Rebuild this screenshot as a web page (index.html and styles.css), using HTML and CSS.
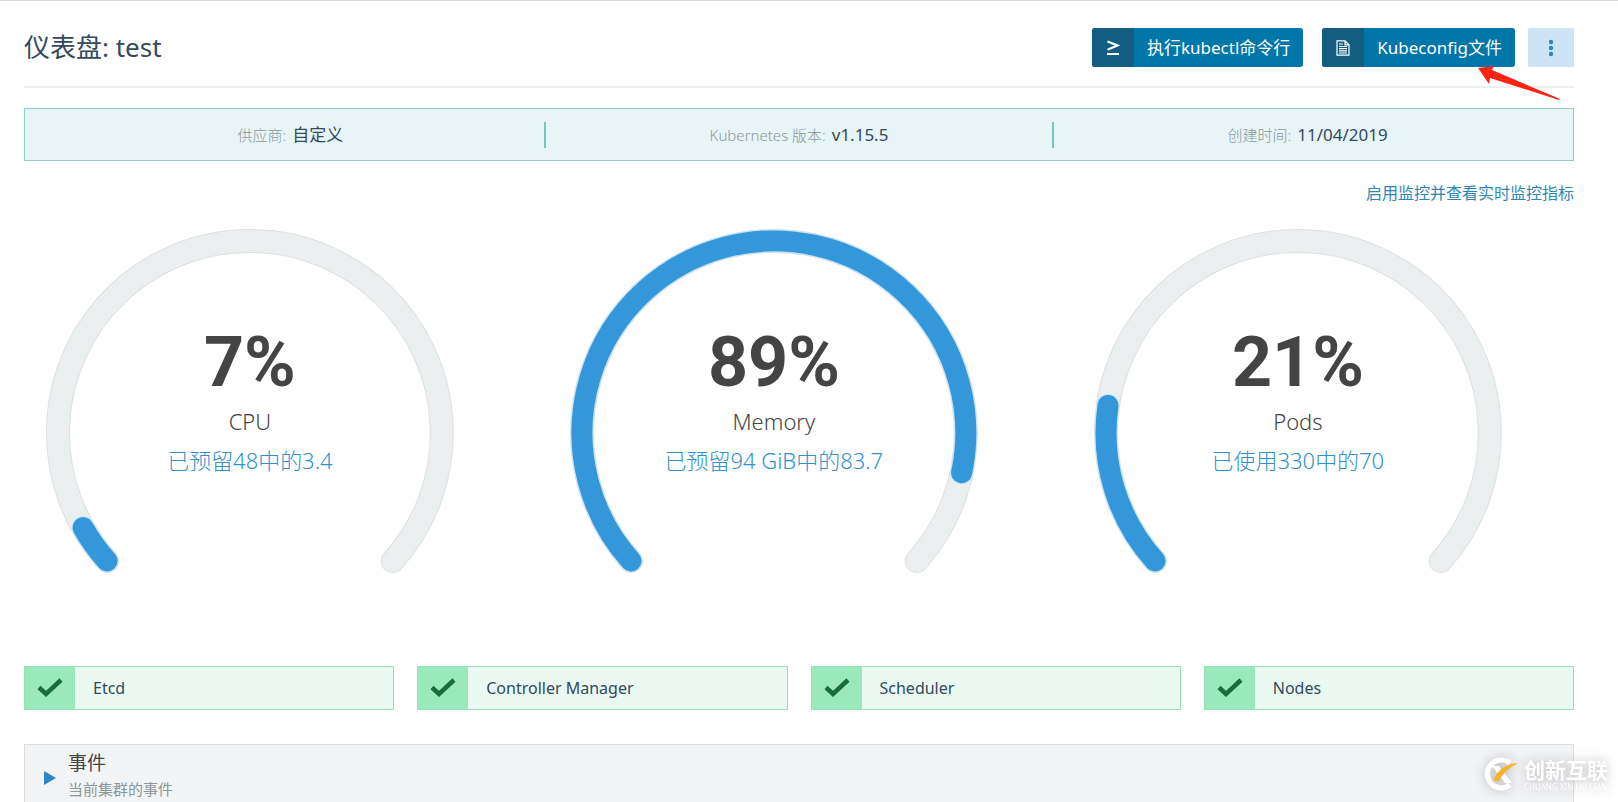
FILE: index.html
```html
<!DOCTYPE html>
<html lang="zh-CN">
<head>
<meta charset="utf-8">
<title>仪表盘: test</title>
<link rel="stylesheet" href="styles.css">
</head>
<body>
<main class="page">
  <header class="header">
    <h1 class="title">仪表盘: test</h1>
    <div class="actions">
      <button class="btn" type="button">
        <span class="btn-icon"><svg width="14" height="16" viewBox="0 0 14 16"><path d="M1.500 1.500L11.500 5.500L1.500 9.800M1 14H13" fill="none" stroke="#fff" stroke-width="2.200"/></svg></span>
        <span class="btn-label">执行kubectl命令行</span>
      </button>
      <button class="btn" type="button">
        <span class="btn-icon"><svg width="14" height="16" viewBox="0 0 14 16"><path d="M1 .8H9L13 4.800V15.200H1ZM9 .8V4.800H13M3 4H7M3 6.500H11M3 8.700H11M3 10.900H11M3 13H11" fill="none" stroke="#fff" stroke-width="1.200"/></svg></span>
        <span class="btn-label">Kubeconfig文件</span>
      </button>
      <button class="more" type="button" aria-label="更多"><svg width="6" height="18" viewBox="0 0 6 18" fill="#2f86c0"><circle cx="3" cy="3" r="2.200"/><circle cx="3" cy="9" r="2.200"/><circle cx="3" cy="15" r="2.200"/></svg></button>
      <svg class="arrow" width="84" height="36" viewBox="0 0 84 36"><path d="M1 2L17 0L15 4L83 33L82 34L13 12L12 18Z" fill="#fb2414"/></svg>
    </div>
  </header>

  <section class="info">
    <div class="info-item"><span class="info-label">供应商:</span><span class="info-value">自定义</span></div>
    <div class="info-item"><span class="info-label">Kubernetes 版本:</span><span class="info-value">v1.15.5</span></div>
    <div class="info-item"><span class="info-label">创建时间:</span><span class="info-value">11/04/2019</span></div>
  </section>

  <div class="monitor"><a class="link" href="#">启用监控并查看实时监控指标</a></div>

  <section class="gauges">
    <svg class="gauge" viewBox="0 0 452 372">
      <path class="rail-edge" d="M83.100 351.200A192 192 0 1 1 368.900 351.200"/>
      <path class="rail" d="M83.100 351.200A192 192 0 1 1 368.900 351.200"/>
      <path class="bar-edge" d="M83.100 351.200A192 192 0 0 1 59.100 317.800"/>
      <path class="bar" d="M83.100 351.200A192 192 0 0 1 59.100 317.800"/>
      <text class="percent" x="226" y="176">7%</text>
      <text class="name" x="226" y="220">CPU</text>
      <text class="usage" x="226" y="259">已预留48中的3.4</text>
    </svg>
    <svg class="gauge" viewBox="0 0 452 372">
      <path class="rail-edge" d="M83.100 351.200A192 192 0 1 1 368.900 351.200"/>
      <path class="rail" d="M83.100 351.200A192 192 0 1 1 368.900 351.200"/>
      <path class="bar-edge" d="M83.100 351.200A192 192 0 1 1 413.800 262.900"/>
      <path class="bar" d="M83.100 351.200A192 192 0 1 1 413.800 262.900"/>
      <text class="percent" x="226" y="176">89%</text>
      <text class="name" x="226" y="220">Memory</text>
      <text class="usage" x="226" y="259">已预留94 GiB中的83.7</text>
    </svg>
    <svg class="gauge" viewBox="0 0 452 372">
      <path class="rail-edge" d="M83.100 351.200A192 192 0 1 1 368.900 351.200"/>
      <path class="rail" d="M83.100 351.200A192 192 0 1 1 368.900 351.200"/>
      <path class="bar-edge" d="M83.100 351.200A192 192 0 0 1 36 195.600"/>
      <path class="bar" d="M83.100 351.200A192 192 0 0 1 36 195.600"/>
      <text class="percent" x="226" y="176">21%</text>
      <text class="name" x="226" y="220">Pods</text>
      <text class="usage" x="226" y="259">已使用330中的70</text>
    </svg>
  </section>

  <section class="statuses">
    <div class="status"><span class="status-icon"><svg width="26" height="20" viewBox="0 0 26 20"><path d="M2 9.500L9 16L24 2" fill="none" stroke="#186c3d" stroke-width="4.500"/></svg></span><span class="status-name">Etcd</span></div>
    <div class="status"><span class="status-icon"><svg width="26" height="20" viewBox="0 0 26 20"><path d="M2 9.500L9 16L24 2" fill="none" stroke="#186c3d" stroke-width="4.500"/></svg></span><span class="status-name">Controller Manager</span></div>
    <div class="status"><span class="status-icon"><svg width="26" height="20" viewBox="0 0 26 20"><path d="M2 9.500L9 16L24 2" fill="none" stroke="#186c3d" stroke-width="4.500"/></svg></span><span class="status-name">Scheduler</span></div>
    <div class="status"><span class="status-icon"><svg width="26" height="20" viewBox="0 0 26 20"><path d="M2 9.500L9 16L24 2" fill="none" stroke="#186c3d" stroke-width="4.500"/></svg></span><span class="status-name">Nodes</span></div>
  </section>

  <section class="events">
    <button class="toggle" type="button" aria-label="展开事件"><svg width="12" height="14" viewBox="0 0 12 14"><path d="M0 0L12 7L0 14Z" fill="#2a87c8"/></svg></button>
    <div>
      <h2 class="events-title">事件</h2>
      <p class="events-note">当前集群的事件</p>
    </div>
  </section>

  <div class="watermark">
    <svg width="36" height="34" viewBox="0 0 36 34"><path d="M27 6A14 14 0 1 0 27 28" fill="none" stroke="#fff" stroke-width="5"/><path d="M9 9H16L29 26H22Z" fill="#fff"/><path d="M35 6C23 7 15 12 10 24L16 24C20 16 26 11 35 6Z" fill="#f3b32b"/></svg>
    <div>
      <div class="brand">创新互联</div>
      <div class="brand-sub">CHUANG XIN HU LIAN</div>
    </div>
  </div>
</main>
</body>
</html>
```
FILE: styles.css
```css
* { box-sizing: border-box; }

body {
  margin: 0;
  background: #fff;
  color: #34495e;
  font-family: "Noto Sans", "Noto Sans CJK SC", sans-serif;
  font-weight: 400;
}

h1, h2, p { margin: 0; font-weight: 400; }

svg { display: block; }

button { font: inherit; border: 0; padding: 0; cursor: pointer; }

.page {
  position: relative;
  height: 100vh;
  overflow: hidden;
  padding: 0 44px 0 24px;
  border-top: 1px solid #dcdcdc;
}

.header {
  display: flex;
  align-items: center;
  justify-content: space-between;
  padding: 27px 0 19px;
  border-bottom: 2px solid #eeeff0;
}

.title { font-size: 26px; line-height: 39px; }

.actions { position: relative; display: flex; }

.btn {
  display: flex;
  height: 39px;
  margin-right: 19px;
  border-radius: 3px;
  overflow: hidden;
  background: #0076a9;
  color: #fff;
  font-size: 17px;
  line-height: 39px;
}

.btn + .btn { margin-right: 13px; }

.btn-icon {
  display: flex;
  align-items: center;
  justify-content: center;
  width: 42px;
  height: 39px;
  background: #125d80;
}

.btn-label { padding: 0 13px; }

.more {
  display: flex;
  align-items: center;
  justify-content: center;
  width: 46px;
  height: 39px;
  border-radius: 2px;
  background: #cce4f6;
}

.arrow { position: absolute; top: 38px; right: 13px; }

.info {
  display: flex;
  align-items: center;
  height: 53px;
  margin-top: 20px;
  padding: 0 12px;
  background: #e7f5f7;
  border: 1px solid #93cdc8;
}

.info-item {
  display: flex;
  flex: 1;
  align-items: center;
  justify-content: center;
  gap: 6px;
  line-height: 26px;
}

.info-item + .info-item { border-left: 2px solid #76c6be; }

.info-label { color: #8b9799; font-size: 15px; font-weight: 300; }

.info-value { font-size: 17px; }

.monitor {
  display: flex;
  justify-content: flex-end;
  padding: 20px 0 5px;
}

.link {
  color: #2f86b5;
  font-size: 16px;
  line-height: 24px;
  text-decoration: none;
}

.gauges {
  display: grid;
  grid-template-columns: repeat(3, 1fr);
  gap: 22px;
}

.gauge { width: 90%; }

.gauge path { fill: none; stroke-linecap: round; }

.rail-edge { stroke: #dde1e2; stroke-width: 24; }
.rail { stroke: #ebefef; stroke-width: 22; }
.bar-edge { stroke: #c5e3f7; stroke-width: 23; }
.bar { stroke: #3497da; stroke-width: 21; }

.gauge text {
  text-anchor: middle;
  fill: #444;
  font-size: 22px;
  font-weight: 300;
}

.gauge .percent {
  font-family: Roboto, sans-serif;
  font-size: 70px;
  font-weight: 700;
}

.gauge .usage { fill: #3190cf; }

.statuses {
  display: grid;
  grid-template-columns: repeat(4, 1fr);
  gap: 23px;
  margin-top: 84px;
}

.status {
  display: flex;
  height: 44px;
  background: #eafaf2;
  border: 1px solid #9be0bd;
}

.status-icon {
  display: flex;
  align-items: center;
  justify-content: center;
  width: 50px;
  background: #9be9bb;
}

.status-name {
  padding-left: 18px;
  font-size: 16px;
  line-height: 42px;
}

.events {
  display: flex;
  align-items: center;
  gap: 12px;
  height: 68px;
  margin-top: 34px;
  padding-left: 19px;
  background: #f3f4f6;
  border: 1px solid #dcdee0;
}

.toggle { background: none; }

.events-title { color: #444; font-size: 19px; line-height: 26px; }

.events-note {
  padding-bottom: 3px;
  color: #8b9799;
  font-size: 15px;
  line-height: 26px;
}

.watermark {
  position: absolute;
  right: 10px;
  bottom: 11px;
  display: flex;
  align-items: center;
  gap: 5px;
  color: #fff;
  filter: drop-shadow(0 0 6px #b4b6b8);
}

.brand { font-size: 21px; font-weight: 700; line-height: 26px; }

.brand-sub { font-size: 8px; line-height: 8px; }
```
